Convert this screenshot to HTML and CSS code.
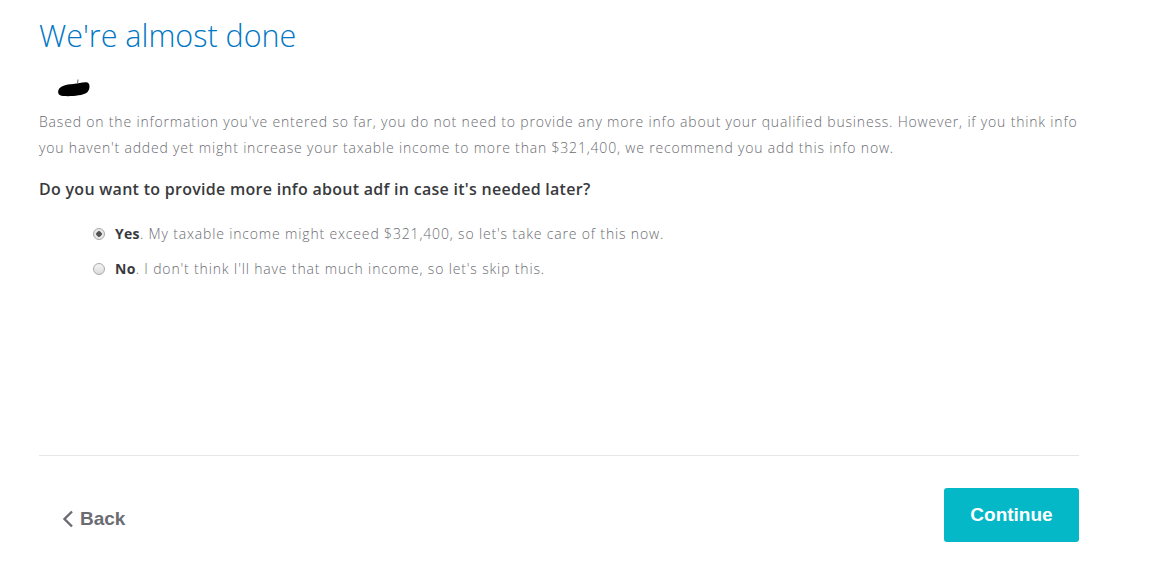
FILE: index.html
```html
<!DOCTYPE html>
<html lang="en">
<head>
    <meta charset="UTF-8">
    <title>We're almost done</title>
    <link rel="stylesheet" href="styles.css">
</head>
<body>
    <div class="page">
        <h1 class="title">We're almost done</h1>

        <div class="redacted">
            <svg width="34" height="20" viewBox="0 0 34 20">
                <path d="M1.5 12 C3 8 9 6.5 16 6 C22 5.5 27 3.5 30.5 4.5 C33.5 6 33 12 30 14.5 C25 18 13 18.5 6 18 C1.5 17.5 0.5 15 1.5 12 Z" fill="#000"/>
                <path d="M20.5 5.5 L21 1.5" stroke="#666" stroke-width="1"/>
            </svg>
        </div>

        <p class="intro">Based on the information you've entered so far, you do not need to provide any more info about your qualified business. However, if you think info you haven't added yet might increase your taxable income to more than $321,400, we recommend you add this info now.</p>

        <h2 class="question">Do you want to provide more info about adf in case it's needed later?</h2>

        <div class="choices">
            <label class="choice">
                <input type="radio" name="more" checked>
                <span><b>Yes</b>. My taxable income might exceed $321,400, so let's take care of this now.</span>
            </label>
            <label class="choice">
                <input type="radio" name="more">
                <span><b>No</b>. I don't think I'll have that much income, so let's skip this.</span>
            </label>
        </div>

        <div class="footer">
            <button class="back">
                <svg width="12" height="18" viewBox="0 0 12 18"><path d="M10 1.5 L2.5 9 L10 16.5" fill="none" stroke="#6b6c72" stroke-width="2.4"/></svg>
                Back
            </button>
            <button class="continue">Continue</button>
        </div>
    </div>
</body>
</html>
```

FILE: styles.css
```css
body {
    margin: 0;
    background: #fff;
    font-family: "Open Sans", Lato, sans-serif;
}

.page {
    width: 1040px;
    padding: 0 39px;
}

.title {
    margin: 15px 0 0;
    font-size: 30.5px;
    font-weight: 300;
    line-height: 40px;
    color: #0077c5;
}

.redacted {
    height: 20px;
    margin: 23px 0 0 18px;
}

.intro {
    margin: 11px 0 0;
    font-size: 14px;
    font-weight: 300;
    line-height: 26px;
    letter-spacing: 0.82px;
    color: #6b6c72;
}

.question {
    margin: 17px 0 0;
    font-size: 16px;
    font-weight: 600;
    line-height: 22px;
    letter-spacing: 0.28px;
    color: #393a3d;
}

.choices {
    margin: 16px 0 0 53px;
}

.choice {
    display: flex;
    align-items: center;
    height: 35px;
    font-size: 14px;
    font-weight: 300;
    letter-spacing: 0.84px;
    color: #6b6c72;
}

.choice input {
    appearance: none;
    box-sizing: border-box;
    margin: 0 10px 0 1px;
    width: 12px;
    height: 12px;
    border: 1px solid #a9a9a9;
    border-radius: 50%;
    background: linear-gradient(#f4f4f4, #dcdcdc);
}

.choice input:checked {
    background: radial-gradient(circle, #555 0 2.5px, #e8e8e8 3px);
}

.choice b {
    font-weight: 700;
    letter-spacing: 0.3px;
    color: #393a3d;
}

.footer {
    display: flex;
    justify-content: space-between;
    align-items: center;
    margin-top: 169px;
    border-top: 1px solid #e6e6e6;
    padding: 32px 0 0;
}

.back {
    display: flex;
    align-items: center;
    gap: 6px;
    margin: 7px 0 0 23px;
    padding: 0;
    border: none;
    background: none;
    font-family: "Liberation Sans", Arial, sans-serif;
    font-size: 19px;
    font-weight: 700;
    color: #6b6c72;
}

.continue {
    width: 135px;
    height: 54px;
    border: none;
    border-radius: 3px;
    background: #04b8c8;
    font-family: "Liberation Sans", Arial, sans-serif;
    font-size: 19px;
    font-weight: 700;
    color: #fff;
}
```
